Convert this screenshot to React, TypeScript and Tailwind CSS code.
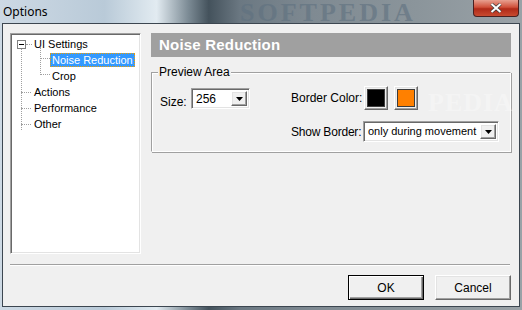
import React from 'react'

const raised =
	'border border-t-white border-l-white border-r-[#696969] border-b-[#696969] shadow-[inset_-1px_-1px_0_#a0a0a0,inset_1px_1px_0_#e3e3e3]'
const sunken =
	'border border-t-[#a0a0a0] border-l-[#a0a0a0] border-r-white border-b-white shadow-[inset_1px_1px_0_#696969,inset_-1px_-1px_0_#e3e3e3]'

function DropArrow() {
	return (
		<div className={`flex shrink-0 items-center justify-center bg-[#f0f0f0] w-[16px] h-[15px] ${raised}`}>
			<svg width="7" height="4" viewBox="0 0 7 4">
				<path d="M0 0h7L3.5 4z" fill="#000" />
			</svg>
		</div>
	)
}

function Combo({ value, width, size }: { value: string; width: string; size: string }) {
	return (
		<div className={`flex items-center justify-between bg-white h-[21px] pl-[4px] pr-[2px] ${width} ${sunken}`}>
			<span className={`leading-none whitespace-nowrap ${size}`}>{value}</span>
			<DropArrow />
		</div>
	)
}

function Swatch({ color }: { color: string }) {
	return (
		<div className={`flex items-center justify-center bg-[#f0f0f0] w-[24px] h-[24px] ${raised}`}>
			<div className="w-[18px] h-[18px] border border-[#3c3c3c]" style={{ background: color }} />
		</div>
	)
}

const dotH = 'border-t border-dotted border-[#a0a0a0]'
const dotV = 'border-l border-dotted border-[#a0a0a0]'

function TreeRow({ label }: { label: string }) {
	return (
		<div className="flex items-center h-[16px] pl-[10px]">
			<div className={`w-[10px] ${dotH}`} />
			<span className="ml-[1px] px-[2px]">{label}</span>
		</div>
	)
}

export default function App() {
	return (
		<div className="relative w-[522px] h-[310px] overflow-hidden flex flex-col bg-[linear-gradient(90deg,#cdd9e4_0%,#b9cad8_20%,#e2ebf1_30%,#7d8c96_36%,#44525c_40%,#6b7882_46%,#7f8a92_60%,#8b959b_80%,#9aa2a7_100%)] font-['Liberation_Sans',Arial,sans-serif] text-[11px] text-black">
			{/* title bar */}
			<div className="relative h-[23px] flex items-center pl-[3px]">
				<span className="font-['Noto_Sans',sans-serif] text-[12px] text-black leading-none">Options</span>
				<span className="absolute left-[240px] top-[0px] text-[26px] font-bold tracking-[3px] text-[#5f7180] opacity-60 font-['Liberation_Serif',serif] leading-none">
					SOFTPEDIA
				</span>
				<div className="absolute right-[3px] top-0 w-[46px] h-[17px] rounded-b-[4px] border border-t-0 border-[#4a2020] bg-[linear-gradient(180deg,#e8a090_0%,#d0503a_45%,#b02a18_55%,#c84a30_100%)] flex items-center justify-center">
					<svg width="12" height="10" viewBox="0 0 12 10">
						<path d="M1.5 1l9 8M10.5 1l-9 8" stroke="#3c3c3c" strokeWidth="3.4" />
						<path d="M1.5 1l9 8M10.5 1l-9 8" stroke="#fff" strokeWidth="2" />
					</svg>
				</div>
			</div>

			{/* dialog body */}
			<div className="relative mx-[2px] mb-[3px] flex-1 flex flex-col bg-[#f0f0f0] border border-[#3c4650] pt-[9px] px-[7px]">
				<div className="flex gap-[10px]">
					{/* tree */}
					<div className={`w-[131px] h-[221px] bg-white pt-[2px] relative ${sunken}`}>
						<div className={`absolute left-[10px] top-[14px] h-[82px] ${dotV}`} />
						<div className={`absolute left-[29px] top-[13px] h-[28px] ${dotV}`} />
						<div className={`absolute left-[29px] top-[24px] w-[10px] ${dotH}`} />
						<div className={`absolute left-[29px] top-[40px] w-[10px] ${dotH}`} />
						<div className="flex items-center h-[16px] pl-[6px]">
							<div className="relative z-10 w-[9px] h-[9px] border border-[#808080] bg-white flex items-center justify-center">
								<div className="w-[5px] h-[1px] bg-black" />
							</div>
							<div className={`w-[6px] ${dotH}`} />
							<span className="ml-[1px] px-[1px]">UI Settings</span>
						</div>
						<div className="flex items-center h-[16px] pl-[39px]">
							<span className="px-[2px] h-[14px] leading-[14px] text-white bg-[#3399ff] outline outline-1 outline-dotted outline-[#f0a000] -outline-offset-1">
								Noise Reduction
							</span>
						</div>
						<div className="flex items-center h-[16px] pl-[39px]">
							<span className="px-[2px]">Crop</span>
						</div>
						<TreeRow label="Actions" />
						<TreeRow label="Performance" />
						<TreeRow label="Other" />
					</div>

					{/* right panel */}
					<div className="flex flex-col w-[360px]">
						<div className="h-[24px] bg-[#a0a0a0] flex items-center pl-[8px]">
							<span className="text-white font-bold text-[15px] tracking-[0.2px]">Noise Reduction</span>
						</div>
						<div className="relative mt-[15px] h-[80px] border border-t-[#a0a0a0] border-l-[#a0a0a0] border-r-white border-b-white shadow-[inset_1px_1px_0_#fff,1px_1px_0_#a0a0a0] flex flex-col pt-[15px] pl-[8px]">
							<span className="absolute left-[6px] top-[-7px] bg-[#f0f0f0] px-[1px] leading-[13px] text-[12px]">
								Preview Area
							</span>
							<div className="flex items-start">
								<span className="mt-[5px] w-[31px] text-[12px]">Size:</span>
								<Combo value="256" width="w-[59px]" size="text-[12px]" />
								<div className="flex flex-col ml-[41px]">
									<div className="flex items-center h-[25px] mt-[-3px]">
										<span className="w-[73px] text-[12px] whitespace-nowrap">Border Color:</span>
										<Swatch color="#000000" />
										<div className="w-[6px]" />
										<Swatch color="#ff8000" />
									</div>
									<div className="flex items-center mt-[11px]">
										<span className="w-[72px] text-[12px] whitespace-nowrap tracking-[-0.2px]">Show Border:</span>
										<Combo value="only during movement" width="w-[136px]" size="text-[11px]" />
									</div>
								</div>
							</div>
						</div>
					</div>
				</div>

				{/* separator */}
				<div className="mt-[10px] h-[2px] w-[500px] border-t border-[#a0a0a0] border-b border-b-white" />

				{/* buttons */}
				<div className="flex justify-end gap-[11px] mt-[9px] pr-[1px]">
					<button className="w-[76px] h-[25px] bg-[#f0f0f0] border border-black shadow-[inset_1px_1px_0_#fff,inset_-1px_-1px_0_#696969,inset_-2px_-2px_0_#a0a0a0] text-[12px]">
						OK
					</button>
					<button className={`w-[76px] h-[25px] bg-[#f0f0f0] text-[12px] ${raised}`}>Cancel</button>
				</div>

				{/* watermark */}
				<span className="absolute left-[425px] top-[66px] text-[26px] leading-none font-bold tracking-[1px] text-white opacity-30 font-['Liberation_Serif',serif] pointer-events-none">
					PEDIA
				</span>
			</div>
		</div>
	)
}
